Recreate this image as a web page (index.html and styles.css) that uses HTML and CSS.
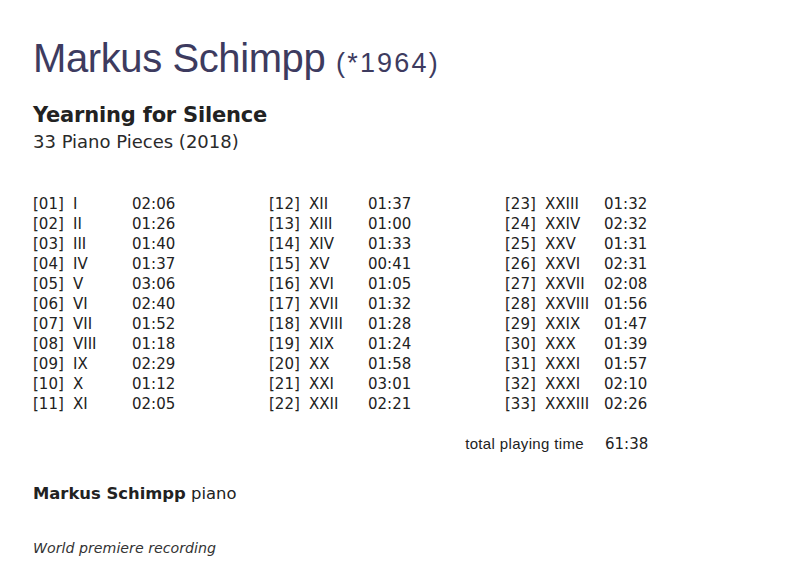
FILE: index.html
```html
<!DOCTYPE html>
<html>
<head>
<meta charset="utf-8">
<link rel="stylesheet" href="styles.css">
</head>
<body>
<div class="page">
  <h1 class="composer">Markus Schimpp <span class="years">(*1964)</span></h1>
  <h2 class="work">Yearning for Silence</h2>
  <div class="subtitle">33 Piano Pieces (2018)</div>

  <div class="tracks">
    <div class="col">
      <div class="row"><span>[01]</span><span>I</span><span>02:06</span></div>
      <div class="row"><span>[02]</span><span>II</span><span>01:26</span></div>
      <div class="row"><span>[03]</span><span>III</span><span>01:40</span></div>
      <div class="row"><span>[04]</span><span>IV</span><span>01:37</span></div>
      <div class="row"><span>[05]</span><span>V</span><span>03:06</span></div>
      <div class="row"><span>[06]</span><span>VI</span><span>02:40</span></div>
      <div class="row"><span>[07]</span><span>VII</span><span>01:52</span></div>
      <div class="row"><span>[08]</span><span>VIII</span><span>01:18</span></div>
      <div class="row"><span>[09]</span><span>IX</span><span>02:29</span></div>
      <div class="row"><span>[10]</span><span>X</span><span>01:12</span></div>
      <div class="row"><span>[11]</span><span>XI</span><span>02:05</span></div>
    </div>
    <div class="col">
      <div class="row"><span>[12]</span><span>XII</span><span>01:37</span></div>
      <div class="row"><span>[13]</span><span>XIII</span><span>01:00</span></div>
      <div class="row"><span>[14]</span><span>XIV</span><span>01:33</span></div>
      <div class="row"><span>[15]</span><span>XV</span><span>00:41</span></div>
      <div class="row"><span>[16]</span><span>XVI</span><span>01:05</span></div>
      <div class="row"><span>[17]</span><span>XVII</span><span>01:32</span></div>
      <div class="row"><span>[18]</span><span>XVIII</span><span>01:28</span></div>
      <div class="row"><span>[19]</span><span>XIX</span><span>01:24</span></div>
      <div class="row"><span>[20]</span><span>XX</span><span>01:58</span></div>
      <div class="row"><span>[21]</span><span>XXI</span><span>03:01</span></div>
      <div class="row"><span>[22]</span><span>XXII</span><span>02:21</span></div>
    </div>
    <div class="col">
      <div class="row"><span>[23]</span><span>XXIII</span><span>01:32</span></div>
      <div class="row"><span>[24]</span><span>XXIV</span><span>02:32</span></div>
      <div class="row"><span>[25]</span><span>XXV</span><span>01:31</span></div>
      <div class="row"><span>[26]</span><span>XXVI</span><span>02:31</span></div>
      <div class="row"><span>[27]</span><span>XXVII</span><span>02:08</span></div>
      <div class="row"><span>[28]</span><span>XXVIII</span><span>01:56</span></div>
      <div class="row"><span>[29]</span><span>XXIX</span><span>01:47</span></div>
      <div class="row"><span>[30]</span><span>XXX</span><span>01:39</span></div>
      <div class="row"><span>[31]</span><span>XXXI</span><span>01:57</span></div>
      <div class="row"><span>[32]</span><span>XXXI</span><span>02:10</span></div>
      <div class="row"><span>[33]</span><span>XXXIII</span><span>02:26</span></div>
    </div>
  </div>

  <div class="total"><span class="total-label">total playing time</span><span class="total-time">61:38</span></div>

  <div class="performer"><b>Markus Schimpp</b> piano</div>
  <div class="note">World premiere recording</div>
</div>
</body>
</html>
```
FILE: styles.css
```css
html, body {
  margin: 0;
  padding: 0;
  background: #ffffff;
}
body {
  font-family: "DejaVu Sans", "Liberation Sans", sans-serif;
  color: #222222;
}
.page {
  padding: 34px 0 0 33px;
  width: 774px;
  box-sizing: border-box;
}
.composer {
  margin: 0;
  font-family: "Liberation Sans", Arial, sans-serif;
  font-weight: normal;
  font-size: 40px;
  line-height: 48px;
  color: #3d3b5f;
  letter-spacing: -0.4px;
}
.years {
  font-size: 27px;
  letter-spacing: 2.2px;
}
.work {
  margin: 15px 0 0;
  font-size: 21px;
  line-height: 26px;
  font-weight: bold;
  color: #222;
  letter-spacing: -0.2px;
}
.subtitle {
  margin-top: 2px;
  font-size: 18px;
  line-height: 24px;
  color: #2a2a2a;
}
.tracks {
  margin-top: 40px;
  display: grid;
  grid-template-columns: 236px 236px 236px;
}
.row {
  display: grid;
  grid-template-columns: 40px 59px auto;
  font-size: 15px;
  line-height: 20px;
  height: 20px;
  color: #222;
}
.total {
  margin-top: 20px;
  display: grid;
  grid-template-columns: 572px 60px;
  line-height: 20px;
}
.total-label {
  font-family: "Liberation Sans", Arial, sans-serif;
  font-size: 15px;
  letter-spacing: 0.35px;
  text-align: right;
  padding-right: 21px;
}
.total-time {
  font-size: 15px;
}
.performer {
  margin-top: 30px;
  font-size: 16.4px;
  line-height: 20px;
}
.note {
  margin-top: 34px;
  font-size: 14.2px;
  line-height: 20px;
  font-style: italic;
  color: #333;
}
```
